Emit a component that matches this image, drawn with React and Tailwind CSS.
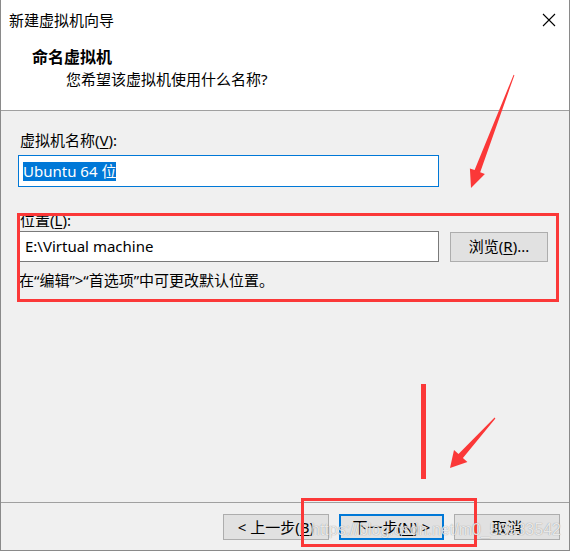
import React from "react";

const font = { fontFamily: '"Noto Sans", "Noto Sans CJK SC", sans-serif' };

function Mnemonic({ children }) {
  return <span className="underline underline-offset-2">{children}</span>;
}

function WizardButton({ children, primary }) {
  return (
    <button
      className={
        primary
          ? "flex h-[26px] w-[105px] items-center justify-center border-2 border-[#0078d7] bg-[#e1e1e1] text-[15px] leading-none text-black"
          : "flex h-[26px] w-[106px] items-center justify-center border border-[#adadad] bg-[#e1e1e1] text-[15px] leading-none text-black"
      }
    >
      {children}
    </button>
  );
}

function Annotations() {
  return (
    <>
      <div className="pointer-events-none absolute left-[16px] top-[213px] h-[89px] w-[542px] border-[3px] border-[#fb3838]" />
      <div className="pointer-events-none absolute left-[300px] top-[498px] h-[49px] w-[176px] border-[3px] border-[#fb3838]" />
      <div className="pointer-events-none absolute left-[420px] top-[384px] h-[95px] w-[5px] bg-[#fb3838]" />
      <svg
        className="pointer-events-none absolute left-0 top-0"
        width="570"
        height="551"
        viewBox="0 0 570 551"
      >
        <polygon
          fill="#fb3838"
          points="512.6,74.8 513.4,75.2 479.2,172.3 483.9,174 470,188 468.9,168.4 473.6,170.1"
        />
        <polygon
          fill="#fb3838"
          points="493.6,417.6 494.4,418.4 461.9,458.1 466.4,462.1 449,468 453,450.1 457.5,454.1"
        />
      </svg>
      <div
        className="pointer-events-none absolute left-[310px] top-[519px] text-[16px] leading-[22px] text-white/80 [text-shadow:0_0_1px_rgba(0,0,0,0.45)]"
        style={{ fontFamily: '"Liberation Sans", Arial, sans-serif' }}
      >
        https://blog.csdn.net/m0_53933542
      </div>
    </>
  );
}

export default function App() {
  return (
    <div
      className="relative flex h-[551px] w-[570px] flex-col overflow-hidden border-x border-b border-[#8a8a8a] bg-[#f0f0f0] text-black"
      style={font}
    >
      {/* header */}
      <div className="flex h-[111px] flex-col border-b border-[#a0a0a0] bg-white">
        <div className="flex h-[40px] items-center justify-between pl-[8px] pr-[13px]">
          <span className="text-[15px] leading-[20px]">新建虚拟机向导</span>
          <svg width="14" height="14" viewBox="0 0 14 14">
            <path d="M1 1 L13 13 M13 1 L1 13" stroke="#000" strokeWidth="1.1" />
          </svg>
        </div>
        <div className="mt-[7px] pl-[31px] text-[16px] font-bold leading-[20px]">
          命名虚拟机
        </div>
        <div className="mt-[2px] pl-[65px] text-[15px] leading-[20px]">
          您希望该虚拟机使用什么名称?
        </div>
      </div>

      {/* form */}
      <div className="flex flex-1 flex-col pl-[17px] pt-[19px]">
        <label className="pl-[2px] text-[15px] leading-[20px]">
          虚拟机名称(<Mnemonic>V</Mnemonic>):
        </label>
        <div className="mt-[5px] flex h-[32px] w-[421px] items-center border border-[#0078d7] bg-white pl-[4px]">
          <span className="bg-[#0078d7] text-[15px] leading-[19px] text-white">
            Ubuntu 64 位
          </span>
        </div>

        <label className="mt-[23px] pl-[2px] text-[15px] leading-[20px]">
          位置(<Mnemonic>L</Mnemonic>):
        </label>
        <div className="mt-[1px] flex items-center gap-[11px]">
          <div className="flex h-[31px] w-[421px] items-center border border-[#7a7a7a] bg-white pl-[6px] text-[15px]">
            E:\Virtual machine
          </div>
          <button className="flex h-[30px] w-[98px] items-center justify-center border border-[#adadad] bg-[#e1e1e1] text-[15px]">
            浏览(<Mnemonic>R</Mnemonic>)...
          </button>
        </div>
        <p className="mt-[8px] pl-[1px] text-[15px] leading-[20px]">
          在“编辑”&gt;“首选项”中可更改默认位置。
        </p>
      </div>

      {/* footer */}
      <div className="flex h-[48px] items-start justify-end gap-[10px] border-t border-[#a0a0a0] pr-[9px] pt-[11px]">
        <WizardButton>
          &lt; 上一步(<Mnemonic>B</Mnemonic>)
        </WizardButton>
        <WizardButton primary>
          下一步(<Mnemonic>N</Mnemonic>) &gt;
        </WizardButton>
        <WizardButton>取消</WizardButton>
      </div>

      <Annotations />
    </div>
  );
}
